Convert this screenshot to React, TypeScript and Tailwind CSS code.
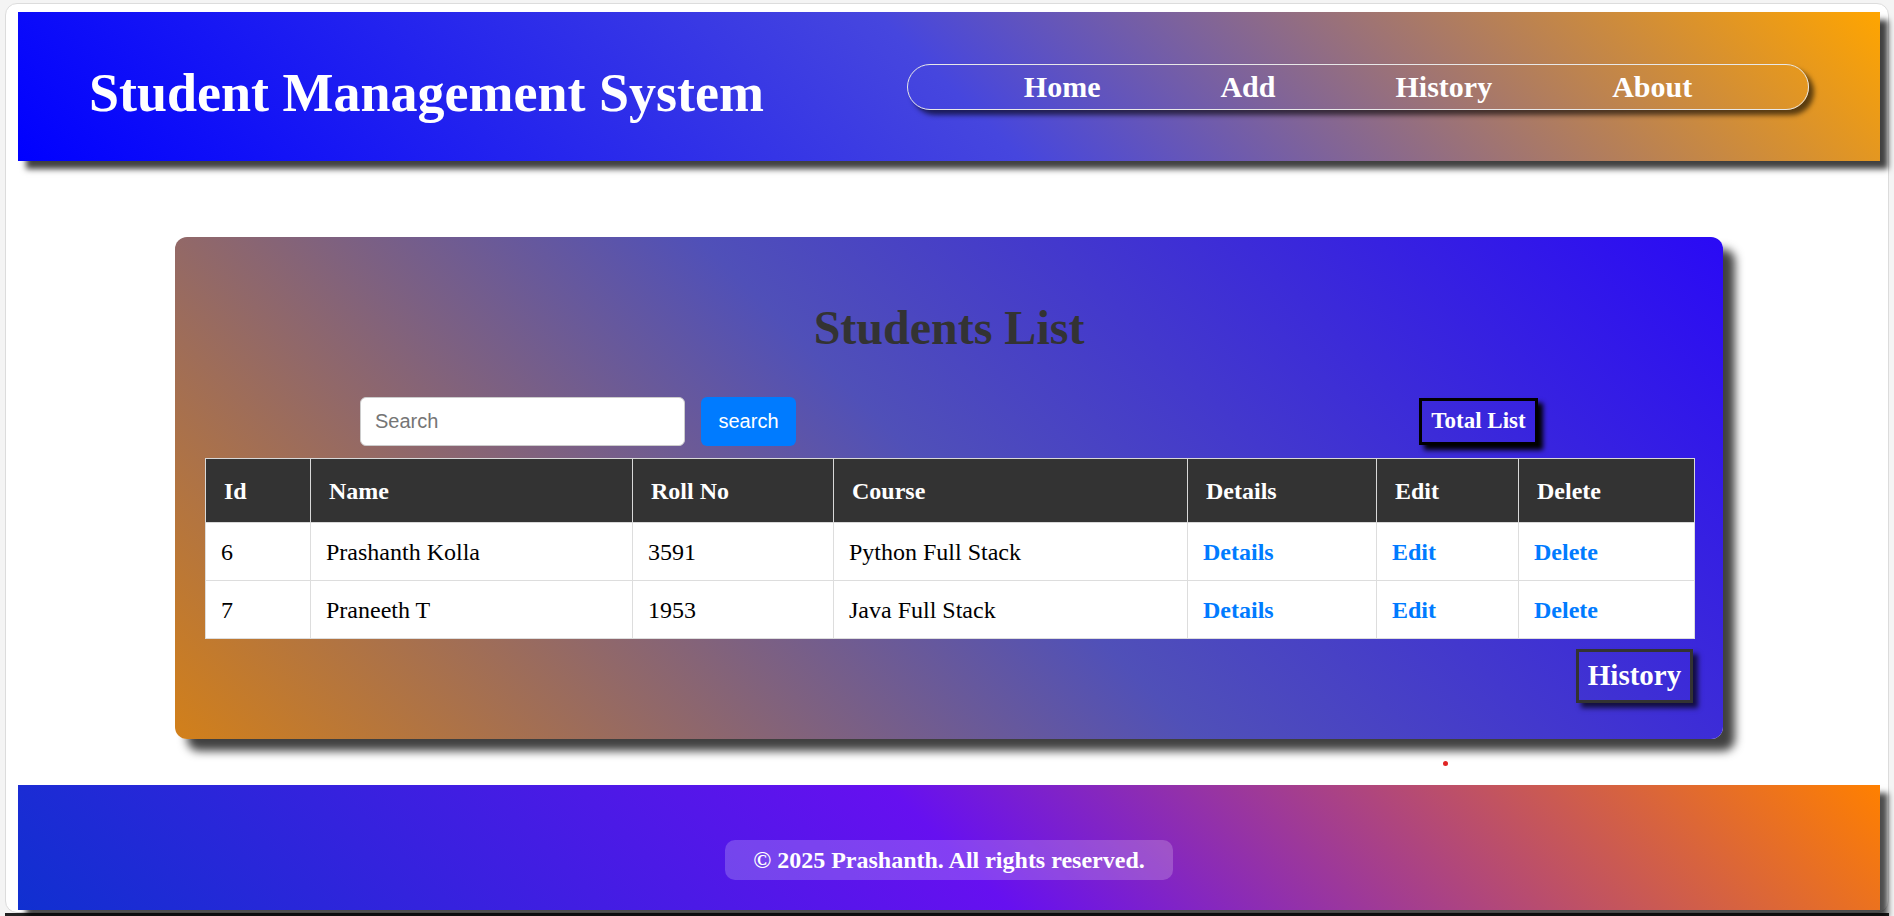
import React, { useState } from 'react';

interface Student {
  id: number;
  name: string;
  roll: number;
  course: string;
}

const students: Student[] = [
  { id: 6, name: 'Prashanth Kolla', roll: 3591, course: 'Python Full Stack' },
  { id: 7, name: 'Praneeth T', roll: 1953, course: 'Java Full Stack' },
];

const navLinks = ['Home', 'Add', 'History', 'About'];

const App: React.FC = () => {
  const [query, setQuery] = useState<string>('');

  const rows = students.filter((s) =>
    s.name.toLowerCase().includes(query.toLowerCase())
  );

  return (
    <div className="h-[916px] w-full overflow-hidden bg-[#f4f4f4] pt-[3px] px-[5px] flex flex-col font-['Liberation_Serif','Times_New_Roman',serif]">
      <div className="relative flex-1 flex flex-col rounded-xl border border-[#dcdcdc] bg-white pt-[8px] pl-[12px] pr-[8px]">
        {/* Header */}
        <header className="h-[149px] shrink-0 flex items-center justify-between px-[71px] bg-[linear-gradient(45deg,#0000ff_0%,#4646de_50%,#ffa500_100%)] shadow-[8px_8px_6px_rgba(0,0,0,0.75)]">
          <h1 className="mt-[12px] text-[54px] font-bold text-white leading-none">Student Management System</h1>
          <nav className="w-[902px] h-[46px] rounded-full border border-[#e8e8e8] flex items-center justify-center gap-[120px] shadow-[5px_5px_5px_rgba(0,0,0,0.6)]">
            {navLinks.map((link) => (
              <a key={link} href="#" className="text-[30px] font-bold text-white leading-none">
                {link}
              </a>
            ))}
          </nav>
        </header>

        {/* Students card */}
        <div className="mt-[76px] mx-auto w-[1548px] h-[502px] shrink-0 rounded-xl pt-[63px] px-[30px] pb-[37px] bg-[linear-gradient(45deg,#d2801a_0%,#5050b8_50%,#2a0af5_100%)] shadow-[12px_12px_10px_rgba(0,0,0,0.75)]">
          <h2 className="text-center text-[48px] font-bold text-[#333] leading-[55px]">Students List</h2>

          <div className="mt-[41px] h-[50px] flex items-center justify-between px-[155px]">
            <div className="flex items-center gap-[16px]">
              <input
                type="text"
                value={query}
                onChange={(e) => setQuery(e.target.value)}
                placeholder="Search"
                className="w-[325px] h-[49px] rounded-md border border-[#ccc] bg-white px-[14px] text-[20px] text-[#333] placeholder:text-[#757575] outline-none font-['Liberation_Sans',Arial,sans-serif]"
              />
              <button className="w-[95px] h-[49px] rounded-md bg-[#007bff] text-white text-[20px] font-['Liberation_Sans',Arial,sans-serif]">
                search
              </button>
            </div>
            <button className="w-[119px] h-[47px] border-[3px] border-black text-white text-[23px] font-bold shadow-[5px_5px_5px_#000]">
              Total List
            </button>
          </div>

          <table className="mt-[12px] w-full table-fixed border-collapse">
            <colgroup>
              <col className="w-[105px]" />
              <col className="w-[322px]" />
              <col className="w-[201px]" />
              <col className="w-[354px]" />
              <col className="w-[189px]" />
              <col className="w-[142px]" />
              <col className="w-[176px]" />
            </colgroup>
            <thead>
              <tr className="bg-[#333] text-white">
                {['Id', 'Name', 'Roll No', 'Course', 'Details', 'Edit', 'Delete'].map((h) => (
                  <th key={h} className="h-[64px] border border-[#d8d8d8] pl-[18px] text-left text-[24px] font-bold">
                    {h}
                  </th>
                ))}
              </tr>
            </thead>
            <tbody>
              {rows.map((s) => (
                <tr key={s.id} className="bg-white text-black">
                  <td className="h-[58px] border border-[#ddd] pl-[15px] text-[24px]">{s.id}</td>
                  <td className="h-[58px] border border-[#ddd] pl-[15px] text-[24px]">{s.name}</td>
                  <td className="h-[58px] border border-[#ddd] pl-[15px] text-[24px]">{s.roll}</td>
                  <td className="h-[58px] border border-[#ddd] pl-[15px] text-[24px]">{s.course}</td>
                  <td className="h-[58px] border border-[#ddd] pl-[15px] text-[24px]">
                    <a href="#" className="font-bold text-[#007bff]">Details</a>
                  </td>
                  <td className="h-[58px] border border-[#ddd] pl-[15px] text-[24px]">
                    <a href="#" className="font-bold text-[#007bff]">Edit</a>
                  </td>
                  <td className="h-[58px] border border-[#ddd] pl-[15px] text-[24px]">
                    <a href="#" className="font-bold text-[#007bff]">Delete</a>
                  </td>
                </tr>
              ))}
            </tbody>
          </table>

          <div className="mt-[10px] flex justify-end">
            <button className="w-[117px] h-[54px] border-[3px] border-[#333] text-white text-[29px] font-bold shadow-[5px_5px_5px_rgba(0,0,0,0.7)]">
              History
            </button>
          </div>
        </div>

        {/* stray red dot */}
        <span className="absolute left-[1437px] top-[757px] w-[5px] h-[5px] rounded-full bg-[#e02424]" />

        {/* Footer */}
        <footer className="mt-[46px] h-[125px] shrink-0 flex justify-center pt-[55px] bg-[linear-gradient(45deg,#1030d0_0%,#6610f0_50%,#ff8000_100%)] shadow-[8px_8px_6px_rgba(0,0,0,0.7)]">
          <div className="h-[40px] px-[28px] rounded-[10px] bg-white/20 text-white text-[24px] font-bold leading-[40px]">
            © 2025 Prashanth. All rights reserved.
          </div>
        </footer>
      </div>
      <div className="h-[3px] shrink-0 bg-[#222]" />
    </div>
  );
};

export default App;
